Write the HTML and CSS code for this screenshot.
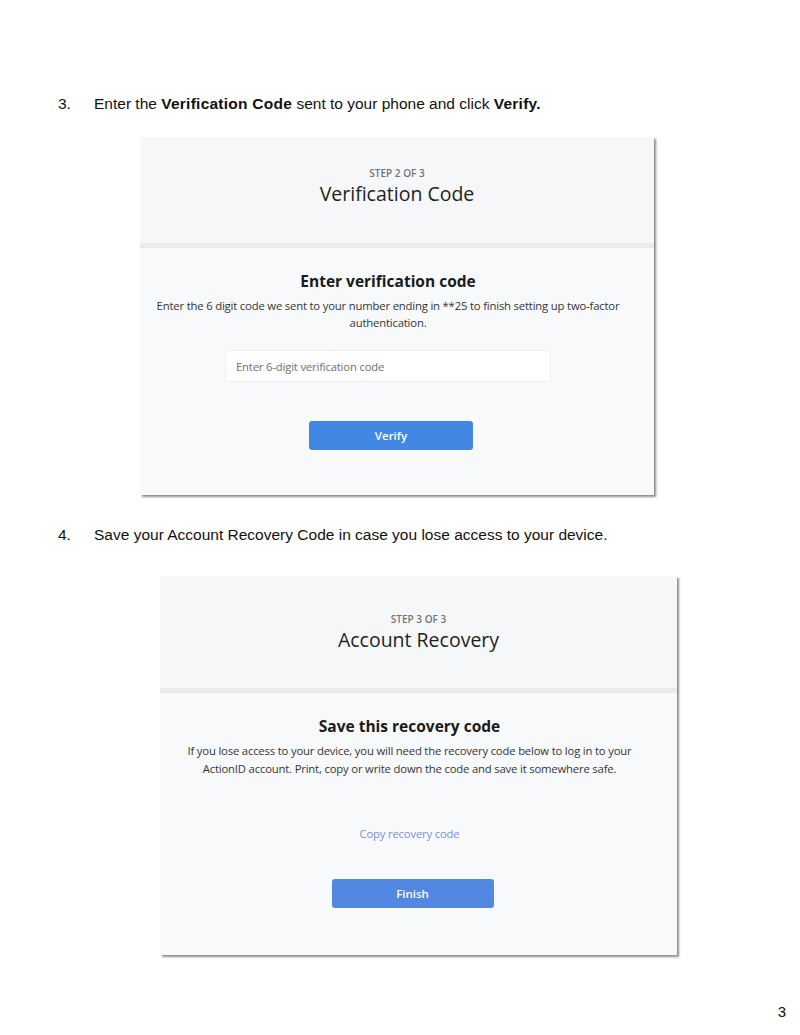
FILE: index.html
```html
<!DOCTYPE html>
<html lang="en">
<head>
    <meta charset="UTF-8">
    <title>Two-factor setup guide</title>
    <link rel="stylesheet" href="styles.css">
</head>
<body>
    <div class="page">
        <div class="step">
            <span class="step-num">3.</span>
            <span>Enter the <b>Verification Code</b> sent to your phone and click <b>Verify.</b></span>
        </div>

        <div class="shot shot-verify">
            <div class="shot-head">
                <div class="step-label">STEP 2 OF 3</div>
                <div class="shot-title">Verification Code</div>
            </div>
            <div class="shot-body">
                <h2>Enter verification code</h2>
                <p>Enter the 6 digit code we sent to your number ending in **25 to finish setting up two-factor authentication.</p>
                <input class="code-input" type="text" placeholder="Enter 6-digit verification code">
                <button class="btn">Verify</button>
            </div>
        </div>

        <div class="step step-four">
            <span class="step-num">4.</span>
            <span>Save your Account Recovery Code in case you lose access to your device.</span>
        </div>

        <div class="shot shot-recovery">
            <div class="shot-head">
                <div class="step-label">STEP 3 OF 3</div>
                <div class="shot-title">Account Recovery</div>
            </div>
            <div class="shot-body">
                <h2>Save this recovery code</h2>
                <p>If you lose access to your device, you will need the recovery code below to log in to your ActionID account. Print, copy or write down the code and save it somewhere safe.</p>
                <a class="copy-link" href="#">Copy recovery code</a>
                <button class="btn btn-finish">Finish</button>
            </div>
        </div>

        <div class="page-num">3</div>
    </div>
</body>
</html>
```

FILE: styles.css
```css
body {
    margin: 0;
    background: #ffffff;
    color: #111111;
    font-family: 'Liberation Sans', Arial, sans-serif;
}
.page {
    display: flex;
    flex-direction: column;
    padding-top: 94px;
}
.step {
    display: flex;
    font-size: 15.5px;
    line-height: 20px;
    padding-left: 58px;
}
.step-num {
    width: 36px;
}
.step b {
    font-weight: 700;
    letter-spacing: 0.25px;
}
.step-four {
    margin-top: 30px;
}

/* screenshot cards */
.shot {
    display: flex;
    flex-direction: column;
    background: #f8f9fb;
    box-shadow: 2px 2px 2px rgba(0, 0, 0, 0.45);
    font-family: 'Open Sans', 'Noto Sans', sans-serif;
    text-align: center;
}
.shot-verify {
    margin: 23px 0 0 140px;
    width: 514px;
    height: 358px;
}
.shot-recovery {
    margin: 31px 0 0 160px;
    width: 517px;
    height: 379px;
}
.shot-head {
    height: 111px;
    background: #f6f7f9;
    border-bottom: 5px solid #eaebed;
    display: flex;
    flex-direction: column;
    padding-top: 30px;
    box-sizing: border-box;
}
.shot-recovery .shot-head {
    height: 117px;
    padding-top: 37px;
}
.step-label {
    font-size: 10px;
    font-weight: 600;
    color: #707478;
    line-height: 12px;
}
.shot-title {
    font-size: 19.5px;
    color: #1e1f22;
    line-height: 26px;
    margin-top: 2px;
}
.shot-body {
    display: flex;
    flex-direction: column;
    align-items: center;
    padding: 22px 18px 0 0;
}
.shot-body h2 {
    margin: 0;
    font-size: 15.5px;
    font-weight: 700;
    line-height: 22px;
    color: #1a1a1a;
}
.shot-body p {
    margin: 5px 0 0;
    width: 480px;
    font-size: 11.3px;
    letter-spacing: -0.18px;
    line-height: 17px;
    color: #333538;
}
.shot-recovery .shot-body p {
    line-height: 18px;
    width: 470px;
}
.code-input {
    margin-top: 19px;
    width: 326px;
    height: 32px;
    box-sizing: border-box;
    border: 1px solid #eceef1;
    border-radius: 3px;
    background: #ffffff;
    padding: 0 10px;
    font-family: 'Open Sans', 'Noto Sans', sans-serif;
    font-size: 11.3px;
    letter-spacing: -0.18px;
    color: #333;
}
.code-input::placeholder {
    color: #6c7075;
}
.btn {
    margin: 39px 0 0 6px;
    width: 164px;
    height: 29px;
    border: none;
    border-radius: 3px;
    background: #4287e3;
    color: #ffffff;
    font-family: 'Open Sans', 'Noto Sans', sans-serif;
    font-size: 11.5px;
    font-weight: 600;
}
.copy-link {
    margin-top: 48px;
    font-size: 11.3px;
    letter-spacing: -0.18px;
    color: #7f8fe0;
    text-decoration: none;
}
.btn-finish {
    margin: 38px 0 0 6px;
    width: 162px;
    background: #5388e2;
}
.page-num {
    align-self: flex-end;
    margin: 48px 14px 0 0;
    font-size: 15px;
}
```
